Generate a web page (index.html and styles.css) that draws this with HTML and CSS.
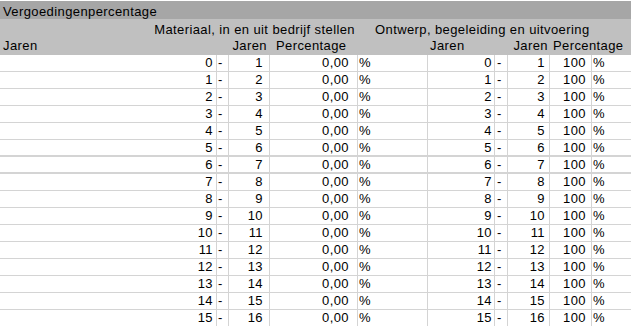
FILE: index.html
```html
<!DOCTYPE html>
<html lang="nl">
<head>
<meta charset="utf-8">
<title>Vergoedingenpercentage</title>
<link rel="stylesheet" href="styles.css">
</head>
<body>
<div class="sheet">
  <div class="title">Vergoedingenpercentage</div>
  <div class="head">
    <div class="h-mat">Materiaal, in en uit bedrijf stellen</div>
    <div class="h-ont">Ontwerp, begeleiding en uitvoering</div>
    <div class="h-jaren-a">Jaren</div>
    <div class="h-jaren-c">Jaren</div>
    <div class="h-perc-d">Percentage</div>
    <div class="h-jaren-f">Jaren</div>
    <div class="h-jaren-h">Jaren</div>
    <div class="h-perc-i">Percentage</div>
  </div>
  <div class="grid">
    <div class="row"><div class="c a">0</div><div class="c b">-</div><div class="c cc">1</div><div class="c d">0,00</div><div class="c e">%</div><div class="c f">0</div><div class="c g">-</div><div class="c h">1</div><div class="c i">100</div><div class="c j">%</div></div>
    <div class="row"><div class="c a">1</div><div class="c b">-</div><div class="c cc">2</div><div class="c d">0,00</div><div class="c e">%</div><div class="c f">1</div><div class="c g">-</div><div class="c h">2</div><div class="c i">100</div><div class="c j">%</div></div>
    <div class="row"><div class="c a">2</div><div class="c b">-</div><div class="c cc">3</div><div class="c d">0,00</div><div class="c e">%</div><div class="c f">2</div><div class="c g">-</div><div class="c h">3</div><div class="c i">100</div><div class="c j">%</div></div>
    <div class="row"><div class="c a">3</div><div class="c b">-</div><div class="c cc">4</div><div class="c d">0,00</div><div class="c e">%</div><div class="c f">3</div><div class="c g">-</div><div class="c h">4</div><div class="c i">100</div><div class="c j">%</div></div>
    <div class="row"><div class="c a">4</div><div class="c b">-</div><div class="c cc">5</div><div class="c d">0,00</div><div class="c e">%</div><div class="c f">4</div><div class="c g">-</div><div class="c h">5</div><div class="c i">100</div><div class="c j">%</div></div>
    <div class="row thick"><div class="c a">5</div><div class="c b">-</div><div class="c cc">6</div><div class="c d">0,00</div><div class="c e">%</div><div class="c f">5</div><div class="c g">-</div><div class="c h">6</div><div class="c i">100</div><div class="c j">%</div></div>
    <div class="row thick"><div class="c a">6</div><div class="c b">-</div><div class="c cc">7</div><div class="c d">0,00</div><div class="c e">%</div><div class="c f">6</div><div class="c g">-</div><div class="c h">7</div><div class="c i">100</div><div class="c j">%</div></div>
    <div class="row"><div class="c a">7</div><div class="c b">-</div><div class="c cc">8</div><div class="c d">0,00</div><div class="c e">%</div><div class="c f">7</div><div class="c g">-</div><div class="c h">8</div><div class="c i">100</div><div class="c j">%</div></div>
    <div class="row"><div class="c a">8</div><div class="c b">-</div><div class="c cc">9</div><div class="c d">0,00</div><div class="c e">%</div><div class="c f">8</div><div class="c g">-</div><div class="c h">9</div><div class="c i">100</div><div class="c j">%</div></div>
    <div class="row"><div class="c a">9</div><div class="c b">-</div><div class="c cc">10</div><div class="c d">0,00</div><div class="c e">%</div><div class="c f">9</div><div class="c g">-</div><div class="c h">10</div><div class="c i">100</div><div class="c j">%</div></div>
    <div class="row"><div class="c a">10</div><div class="c b">-</div><div class="c cc">11</div><div class="c d">0,00</div><div class="c e">%</div><div class="c f">10</div><div class="c g">-</div><div class="c h">11</div><div class="c i">100</div><div class="c j">%</div></div>
    <div class="row"><div class="c a">11</div><div class="c b">-</div><div class="c cc">12</div><div class="c d">0,00</div><div class="c e">%</div><div class="c f">11</div><div class="c g">-</div><div class="c h">12</div><div class="c i">100</div><div class="c j">%</div></div>
    <div class="row"><div class="c a">12</div><div class="c b">-</div><div class="c cc">13</div><div class="c d">0,00</div><div class="c e">%</div><div class="c f">12</div><div class="c g">-</div><div class="c h">13</div><div class="c i">100</div><div class="c j">%</div></div>
    <div class="row"><div class="c a">13</div><div class="c b">-</div><div class="c cc">14</div><div class="c d">0,00</div><div class="c e">%</div><div class="c f">13</div><div class="c g">-</div><div class="c h">14</div><div class="c i">100</div><div class="c j">%</div></div>
    <div class="row"><div class="c a">14</div><div class="c b">-</div><div class="c cc">15</div><div class="c d">0,00</div><div class="c e">%</div><div class="c f">14</div><div class="c g">-</div><div class="c h">15</div><div class="c i">100</div><div class="c j">%</div></div>
    <div class="row"><div class="c a">15</div><div class="c b">-</div><div class="c cc">16</div><div class="c d">0,00</div><div class="c e">%</div><div class="c f">15</div><div class="c g">-</div><div class="c h">16</div><div class="c i">100</div><div class="c j">%</div></div>
  </div>
</div>
</body>
</html>
```
FILE: styles.css
```css
html, body {
  margin: 0;
  padding: 0;
  background: #ffffff;
}
body {
  font-family: "Liberation Sans", Arial, sans-serif;
  font-size: 13px;
  letter-spacing: 0.4px;
  color: #000000;
  overflow: hidden;
}
.sheet {
  width: 631px;
  padding-top: 1px;
}
.title {
  background: #a6a6a6;
  height: 18px;
  box-sizing: border-box;
  padding: 3px 0 0 3px;
  line-height: 15px;
  white-space: nowrap;
}
.head {
  background: #c0c0c0;
  display: grid;
  grid-template-columns: 217px 12px 41px 88px 70px 67px 13px 42px 42px 1fr;
  grid-template-rows: 16px 16px;
  padding: 3px 0 1px 0;
  line-height: 16px;
  white-space: nowrap;
}
.h-mat {
  grid-column: 1 / 5;
  grid-row: 1;
  text-align: right;
  padding-right: 3px;
}
.h-ont {
  grid-column: 5 / 11;
  grid-row: 1;
  padding-left: 17px;
}
.h-jaren-a {
  grid-column: 1;
  grid-row: 2;
  padding-left: 3px;
}
.h-jaren-c {
  grid-column: 3;
  grid-row: 2;
  text-align: right;
  padding-right: 3px;
}
.h-perc-d {
  grid-column: 4;
  grid-row: 2;
  padding-left: 6px;
}
.h-jaren-f {
  grid-column: 6;
  grid-row: 2;
  padding-left: 2px;
}
.h-jaren-h {
  grid-column: 8;
  grid-row: 2;
  text-align: right;
  padding-right: 2px;
}
.h-perc-i {
  grid-column: 9 / 11;
  grid-row: 2;
  padding-left: 3px;
}
.grid {
  display: flex;
  flex-direction: column;
}
.row {
  display: grid;
  grid-template-columns: 217px 12px 41px 88px 70px 67px 13px 42px 42px 1fr;
  height: 17px;
}
.c {
  box-sizing: border-box;
  height: 17px;
  border-right: 1px solid #d4d4d4;
  border-bottom: 1px solid #d4d4d4;
  line-height: 16px;
  white-space: nowrap;
  overflow: hidden;
}
.row.thick .c {
  border-bottom-width: 2px;
}
.c.j {
  border-right: none;
}
.a { text-align: right; padding-right: 3px; }
.b { padding-left: 1px; }
.cc { text-align: right; padding-right: 6px; }
.d { text-align: right; padding-right: 8px; }
.e { padding-left: 1px; }
.f { text-align: right; padding-right: 2px; }
.g { padding-left: 2px; }
.h { text-align: right; padding-right: 4px; }
.i { text-align: right; padding-right: 5px; }
.j { padding-left: 1px; }
```
